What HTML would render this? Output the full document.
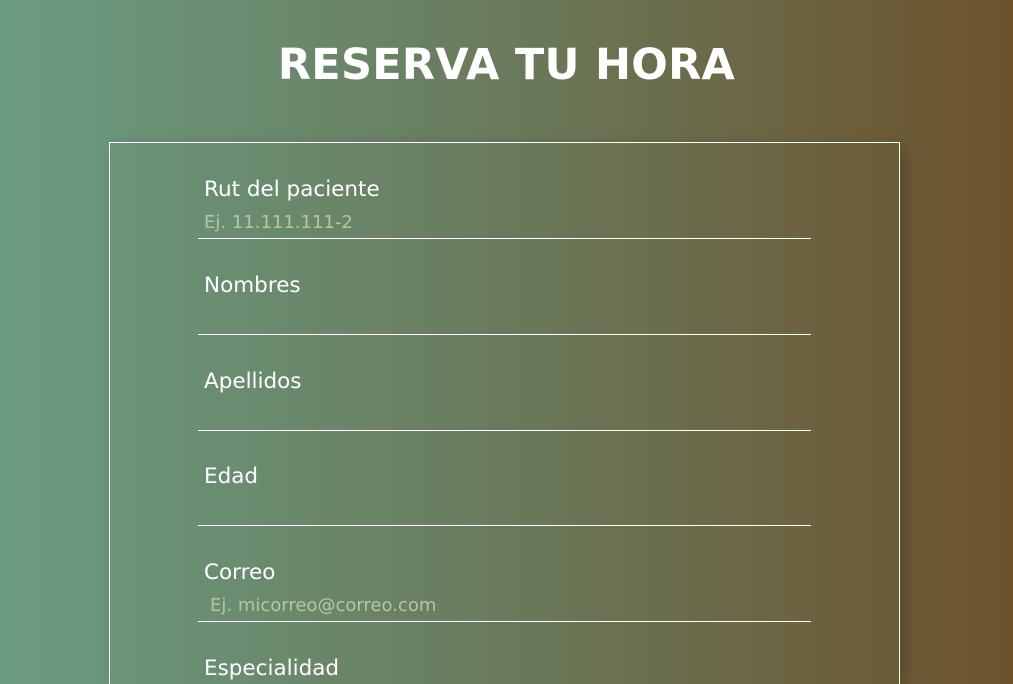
<!DOCTYPE html>
<html><head><meta charset="utf-8"><style>
html,body{margin:0;padding:0;width:1013px;height:684px;overflow:hidden}
body{background:linear-gradient(to right,#6b9c82 0%,#6a7a5c 50%,#6d522c 100%);font-family:"DejaVu Sans","Liberation Sans",sans-serif;color:#fff;position:relative}
h1{position:absolute;top:37px;left:0;width:1013px;margin:0;text-align:center;font-size:43px;font-weight:bold;letter-spacing:0.3px;line-height:56px}
.box{position:absolute;left:109px;top:142px;width:789px;height:542px;border:1px solid #fff;border-bottom:none;box-shadow:6px 4px 14px rgba(0,0,0,0.18)}
.f{position:absolute;left:198px;width:613px;height:96px;border-bottom:1px solid #fff}
.f .l{position:absolute;left:6px;top:35px;font-size:21.5px;line-height:26px}
.f .p{position:absolute;left:6px;top:70px;font-size:18px;line-height:22px;color:#b7c4a8;white-space:nowrap}
</style></head><body>
<h1>RESERVA TU HORA</h1>
<div class="box"></div>
<div class="f" style="top:142px"><div class="l">Rut del paciente</div><div class="p">Ej. 11.111.111-2</div></div>
<div class="f" style="top:238px"><div class="l">Nombres</div></div>
<div class="f" style="top:334px"><div class="l">Apellidos</div></div>
<div class="f" style="top:429px"><div class="l">Edad</div></div>
<div class="f" style="top:525px"><div class="l">Correo</div><div class="p" style="left:12px">Ej. micorreo@correo.com</div></div>
<div class="f" style="top:621px;height:60px;border:none"><div class="l">Especialidad</div></div>
</body></html>
